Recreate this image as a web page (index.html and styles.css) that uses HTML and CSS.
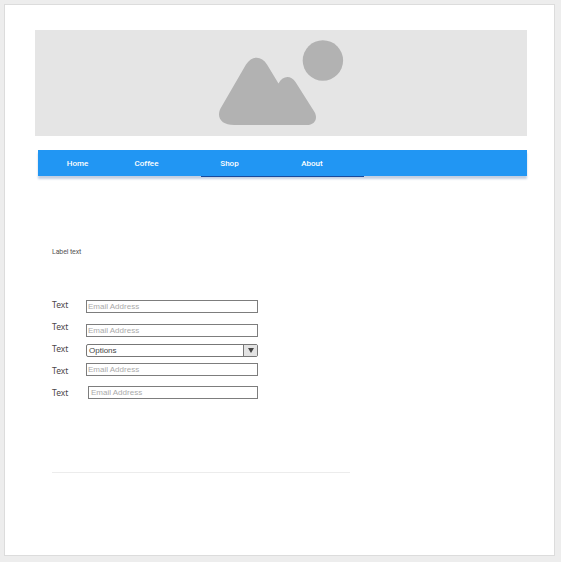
FILE: index.html
```html
<!DOCTYPE html>
<html lang="en">
<head>
<meta charset="utf-8">
<title>Coffee shop</title>
<link rel="stylesheet" href="styles.css">
</head>
<body>
<main class="page">
  <div class="banner">
    <svg class="placeholder" viewBox="0 0 126 87" aria-hidden="true">
      <path d="M28 25.500C34 16.500 43.500 16.500 49 25.500L60.500 44.500C65 36.500 72.500 36 77.500 43L96.500 73C100.500 80 96 86 89 86H16C4 86-2 79 2.500 69.500Z"/>
      <circle cx="104.900" cy="21.500" r="20.200"/>
    </svg>
  </div>
  <nav class="nav">
    <a class="tab">Home</a>
    <a class="tab coffee">Coffee</a>
    <a class="tab shop">Shop</a>
    <a class="tab about">About</a>
  </nav>
  <p class="caption">Label text</p>
  <form class="form">
    <div class="labels">
      <span>Text</span>
      <span>Text</span>
      <span>Text</span>
      <span>Text</span>
      <span>Text</span>
    </div>
    <div class="fields">
      <div class="field first">Email Address</div>
      <div class="field second">Email Address</div>
      <div class="select">
        <span class="value">Options</span>
        <span class="toggle"><svg viewBox="0 0 6 5" aria-hidden="true"><path d="M0 0H6L3 5Z"/></svg></span>
      </div>
      <div class="field fourth">Email Address</div>
      <div class="field last">Email Address</div>
    </div>
  </form>
  <hr class="divider">
</main>
</body>
</html>
```
FILE: styles.css
```css
* { box-sizing: border-box; }

body {
  margin: 0;
  height: 562px;
  padding: 4px 0 0 4px;
  overflow: hidden;
  background: #ededed;
  font-family: Roboto, sans-serif;
}

.page {
  width: 551px;
  height: 552px;
  padding: 25px 0 0 30px;
  border: 1px solid #dcdcdc;
  background: #fff;
}

.banner {
  width: 492px;
  height: 106px;
  padding: 9px 0 0 183px;
  background: #e5e5e5;
}

.placeholder {
  display: block;
  width: 126px;
  height: 87px;
  fill: #b2b2b2;
}

.nav {
  display: grid;
  grid-template-columns: 79px 84px 81px 82px;
  width: 489px;
  height: 26px;
  margin: 14px 0 0 3px;
  background: #2196f3;
  box-shadow: 0 3px 2px #c3cfe2;
}

.tab {
  height: 27px;
  color: #fff;
  font-size: 8px;
  font-weight: 500;
  line-height: 27px;
  text-align: center;
}

.coffee { padding-right: 25px; }
.shop { padding-right: 24px; }
.about { padding-right: 22px; }
.shop, .about { border-bottom: 1px solid #174a9c; }

.caption {
  margin: 71px 0 0 17px;
  color: #555;
  font-size: 7px;
  line-height: 10px;
  letter-spacing: -0.12px;
}

.form {
  display: flex;
  margin: 37px 0 0 17px;
}

.labels {
  width: 34px;
  color: #4c4648;
  font-family: "Noto Sans", sans-serif;
  font-size: 8.5px;
  line-height: 22px;
}

.labels span { display: block; }

.fields {
  width: 172px;
  padding-top: 6px;
  font-family: "Liberation Sans", sans-serif;
  font-size: 8px;
}

.field {
  height: 13px;
  padding-left: 1px;
  border: 1px solid #7d7d7d;
  color: #aaa;
  line-height: 12px;
}

.second { margin-top: 11px; }

.select {
  display: flex;
  height: 13px;
  margin-top: 7px;
  border: 1px solid #777;
  border-radius: 2px;
  color: #444;
  line-height: 12px;
}

.value { flex: 1; padding-left: 2px; }

.toggle {
  display: flex;
  align-items: center;
  justify-content: center;
  width: 14px;
  border-left: 1px solid #777;
  background: #e3e3e3;
}

.toggle svg { width: 6px; height: 5px; fill: #444; }

.fourth { margin-top: 6px; }
.last { margin: 10px 0 0 2px; padding-left: 2px; }

.divider {
  width: 298px;
  height: 1px;
  margin: 68px 0 0 17px;
  border: 0;
  background: #ececec;
}
```
